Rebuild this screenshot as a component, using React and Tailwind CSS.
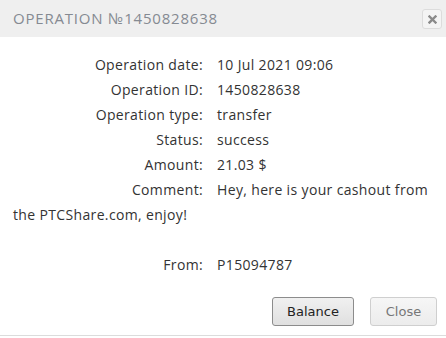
export default function App() {
  const rows = [
    ["Operation date:", "10 Jul 2021 09:06"],
    ["Operation ID:", "1450828638"],
    ["Operation type:", "transfer"],
    ["Status:", "success"],
    ["Amount:", "21.03 $"],
    ["Comment:", "Hey, here is your cashout from the PTCShare.com, enjoy!"],
  ];
  return (
    <div className="w-[446px] h-[338px] bg-white overflow-hidden flex flex-col">
      <div className="h-[37px] bg-[#efefef] flex items-center justify-between pl-[13px] pr-[4px] shrink-0">
        <div
          className="text-[15px] tracking-[0.8px] text-[#858a92] font-medium"
          style={{ fontFamily: '"Open Sans", sans-serif' }}
        >
          OPERATION №1450828638
        </div>
        <div className="w-[20px] h-[20px] mt-[1px] rounded-[3px] border border-[#dcdcdc] bg-[#f4f4f4] flex items-center justify-center">
          <svg width="9" height="9" viewBox="0 0 9 9">
            <path d="M1.5 1.5 L7.5 7.5 M7.5 1.5 L1.5 7.5" stroke="#8a8a8a" strokeWidth="2.4" strokeLinecap="square" />
          </svg>
        </div>
      </div>
      <div
        className="pt-[15px] pl-[13px] pr-[10px] text-[14px] leading-[25px] tracking-[0.35px] text-[#333]"
        style={{ fontFamily: '"Open Sans", sans-serif' }}
      >
        {rows.map(([k, v]) => (
          <div key={k}>
            <span className="inline-block w-[190px] text-right mr-[14px]">{k}</span>
            {v}
          </div>
        ))}
        <div className="h-[25px]" />
        <div>
          <span className="inline-block w-[190px] text-right mr-[14px]">From:</span>
          P15094787
        </div>
      </div>
      <div className="flex-1" />
      <div
        className="flex justify-end gap-[16px] pr-[9px] pb-[9px]"
        style={{ fontFamily: '"DejaVu Sans", sans-serif' }}
      >
        <button className="w-[82px] h-[29px] rounded-[3px] border border-[#8c8c8c] bg-gradient-to-b from-[#f0f0f0] to-[#e0e0e0] text-[13px] text-[#222]">
          Balance
        </button>
        <button className="w-[67px] h-[29px] rounded-[3px] border border-[#cfcfcf] bg-gradient-to-b from-[#f6f6f6] to-[#ececec] text-[13px] text-[#777]">
          Close
        </button>
      </div>
      <div className="h-[1px] bg-[#dcdcdc] shrink-0" />
      <div className="h-[2px] shrink-0" />
    </div>
  );
}
